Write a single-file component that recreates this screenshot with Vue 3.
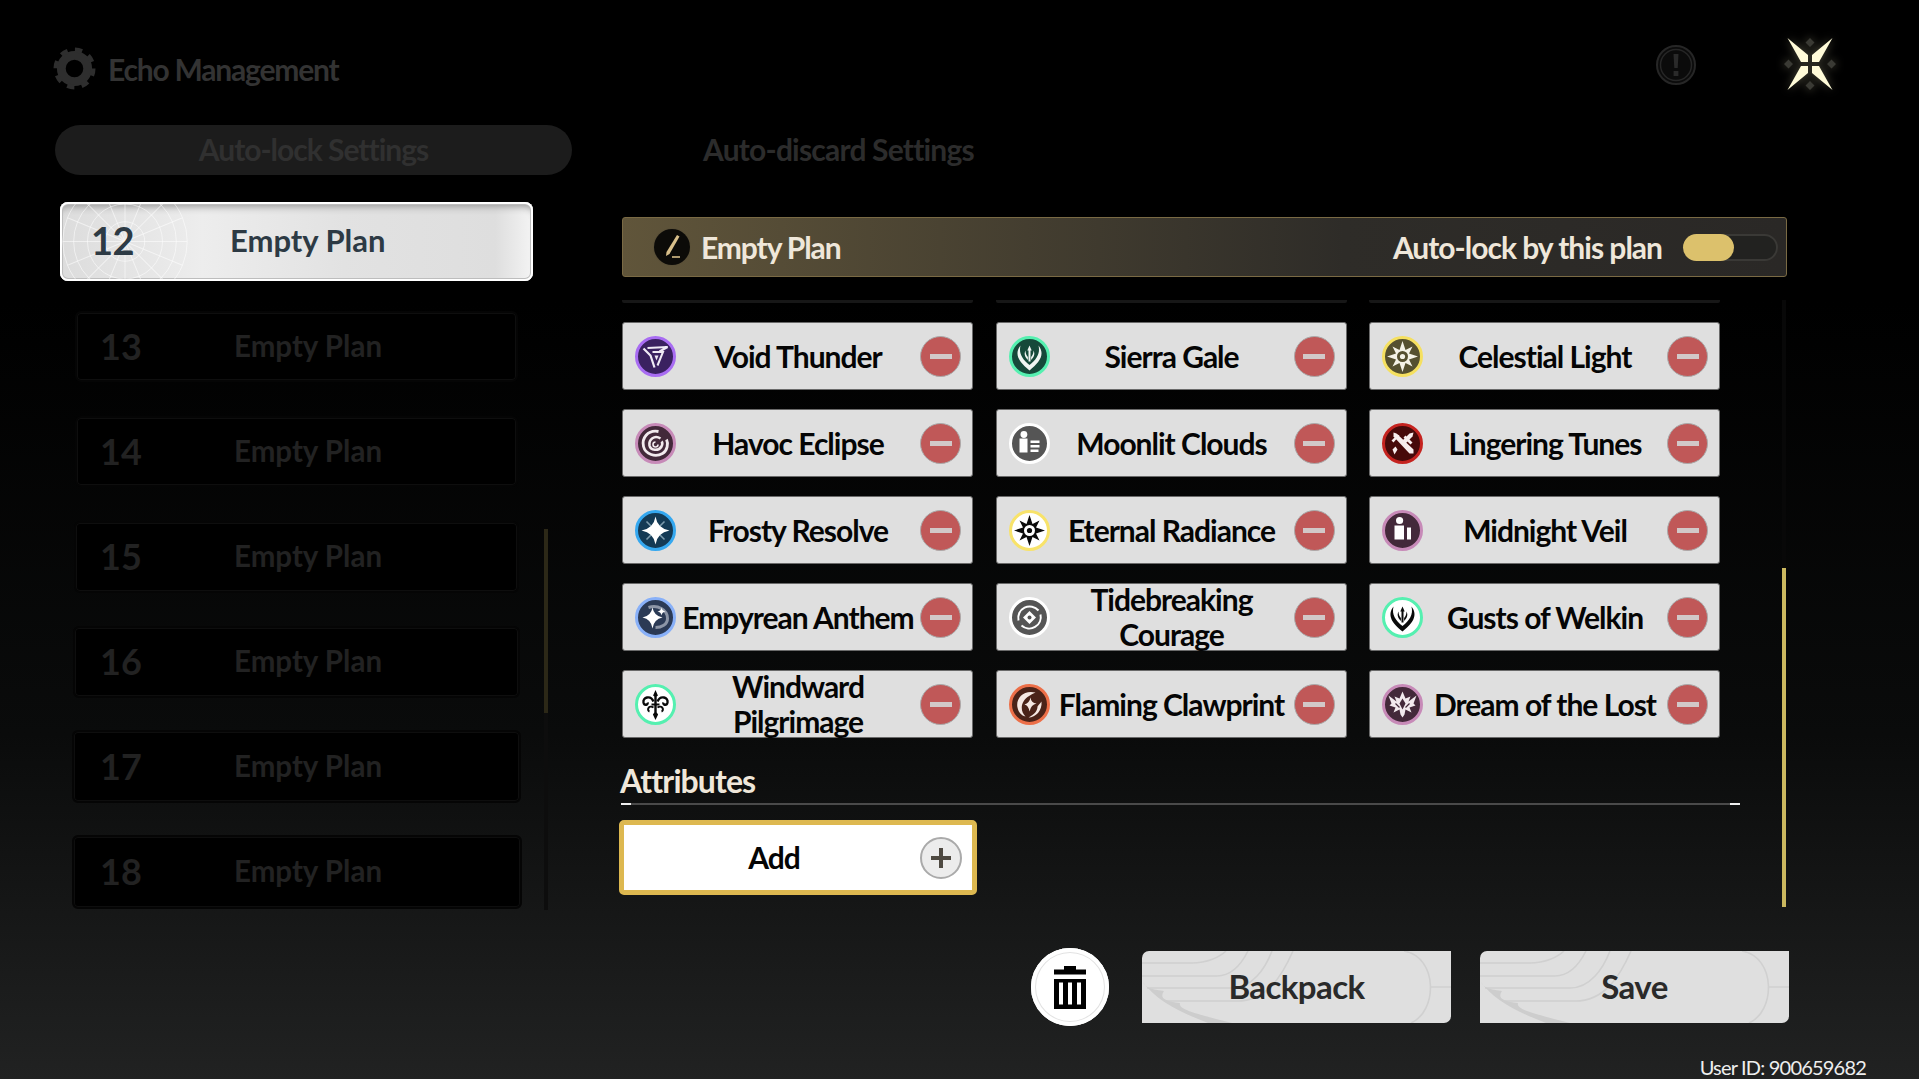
<script setup>
const plans = [
  { n: 13, w: 443, h: 71 },
  { n: 14, w: 443, h: 71 },
  { n: 15, w: 445, h: 72 },
  { n: 16, w: 447, h: 72 },
  { n: 17, w: 449, h: 73 },
  { n: 18, w: 450, h: 74 }
]
const sun = (c, bg) => [
  { d: 'M0 -15.5 L3 -6.5 L10 -10 L6.5 -3 L15.5 0 L6.5 3 L10 10 L3 6.5 L0 15.5 L-3 6.5 L-10 10 L-6.5 3 L-15.5 0 L-6.5 -3 L-10 -10 L-3 -6.5Z', fill: c },
  { d: 'M-5.5 0a5.5 5.5 0 1 0 11 0a5.5 5.5 0 1 0 -11 0Z', fill: bg },
  { d: 'M-2.6 0a2.6 2.6 0 1 0 5.2 0a2.6 2.6 0 1 0 -5.2 0Z', fill: c }
]
const gust = c => [
  { d: 'M0 -11 L2.2 -6 L1 -6 L1 5 L-1 5 L-1 -6 L-2.2 -6Z', fill: c },
  { d: 'M-4 -6 C-6 -2 -4 1 -1.6 3.5 L-1.6 0.5 C-3 -1 -4 -3 -4 -6Z M4 -6 C6 -2 4 1 1.6 3.5 L1.6 0.5 C3 -1 4 -3 4 -6Z', fill: c },
  { d: 'M-9 -11 C-16 -2 -10 6 0 14 C10 6 16 -2 9 -11 C11 -3 7 3 0 8.5 C-7 3 -11 -3 -9 -11Z', fill: c }
]
const glyphs = {
  void: [
    { d: 'M-12 -8 L-5 -1 L-1 11', stroke: '#efeaf5', w: 2.2 },
    { d: 'M-8 -8.5 L12 -9.5 L4 -5', stroke: '#efeaf5', w: 2.2 },
    { d: 'M-3 -4.5 L7.5 -4.5 L2 9', stroke: '#efeaf5', w: 2 },
    { d: 'M-1 -1 L3 -1 L1 4Z', fill: '#efeaf5' }
  ],
  sierra: gust('#f0f5f2'),
  celestial: sun('#f4f2e6', '#55502f'),
  havoc: [
    { d: 'M3 -12 C-8 -14 -14 -5 -12 3 C-10 11 0 14 7 10 C12 7 13 0 11 -4', stroke: '#f2eaee', w: 2.8 },
    { d: 'M5 -5 C-1 -9 -7 -4 -6 2 C-5 7 3 8 6 3 C7 1 7 -1 6 -2', stroke: '#f2eaee', w: 2.6 },
    { d: 'M0 -1.5 a2.5 2.5 0 1 0 2.5 2.5', stroke: '#f2eaee', w: 1.6 }
  ],
  moonlit: [
    { d: 'M-9 -9a3.4 3.4 0 1 0 6.8 0a3.4 3.4 0 1 0 -6.8 0Z', fill: '#fff' },
    { d: 'M-10 -5 H-2 V9 H-10Z', fill: '#fff' },
    { d: 'M1 -3 H10 V-0.5 H1Z M1 1.5 H10 V4 H1Z M1 6 H9 V8.5 H1Z', fill: '#fff' }
  ],
  lingering: [
    { d: 'M-9 -11 L-6 -10 L11 6 L11 10 L7 10 L-9 -7Z', fill: '#f8eeee' },
    { d: 'M11 -11 L7 -10 L-1 -2 L2 1 L10 -7Z', fill: '#f8eeee' },
    { d: 'M-11 -3 L-5 -9 L-3 -8 L-9 -1Z M3 -8 L10 -1 L8 1 L1 -6Z', fill: '#f8eeee' },
    { d: 'M-7 3 L-5 6 L-8 11 L-10 6Z', fill: '#f8eeee' }
  ],
  frosty: [
    { d: 'M-9 -9 L9 9 M9 -9 L-9 9', stroke: '#7d9bad', w: 1.6 },
    { d: 'M0 -14 Q1.8 -2.2 14 0 Q1.8 2.2 0 14 Q-1.8 2.2 -14 0 Q-1.8 -2.2 0 -14Z', fill: '#fff' }
  ],
  eternal: sun('#0b0b0b', '#fff'),
  midnight: [
    { d: 'M-6.5 -10a3.6 3.6 0 1 0 7.2 0a3.6 3.6 0 1 0 -7.2 0Z', fill: '#fff' },
    { d: 'M-8 -5 H1.5 V9 H-8Z', fill: '#fff' },
    { d: 'M4.5 -3 H8.5 V9 H4.5Z', fill: '#fff' }
  ],
  empyrean: [
    { d: 'M-7 -10 C2 -13 12 -8 12 1 C12 7 6 10 0 10', stroke: '#8c95a6', w: 3 },
    { d: 'M-3 -10 Q-1.6 -1.6 7 0 Q-1.6 1.6 -3 11 Q-4.4 1.6 -13 0 Q-4.4 -1.6 -3 -10Z', fill: '#fff' },
    { d: 'M6 -10 Q6.5 -6.5 10 -6 Q6.5 -5.5 6 -2 Q5.5 -5.5 2 -6 Q5.5 -6.5 6 -10Z', fill: '#fff' }
  ],
  tide: [
    { d: 'M-11 3 A11.5 11.5 0 0 1 9 -7', stroke: '#fff', w: 2 },
    { d: 'M11 -3 A11.5 11.5 0 0 1 -8 8', stroke: '#fff', w: 2 },
    { d: 'M0 -6.5 L6.5 0 L0 6.5 L-6.5 0Z', fill: '#fff' },
    { d: 'M-2 0a2 2 0 1 0 4 0a2 2 0 1 0 -4 0Z', fill: '#555' }
  ],
  gusts: gust('#0a0a0a'),
  wind: [
    { d: 'M0 -14.5 L2.4 -9 L1.2 -8 L1.2 8 L2.6 10 L0 15.5 L-2.6 10 L-1.2 8 L-1.2 -8 L-2.4 -9Z', fill: '#0a0a0a' },
    { d: 'M-2 -3 C-5 -10 -13 -7 -12 -2 C-11 2 -7 0 -8 -2 M2 -3 C5 -10 13 -7 12 -2 C11 2 7 0 8 -2', stroke: '#0a0a0a', w: 2.4 },
    { d: 'M-2 3 C-7 0 -9 6 -6 7 M2 3 C7 0 9 6 6 7 M-4 0 H4', stroke: '#0a0a0a', w: 2 }
  ],
  flaming: [
    { d: 'M6 -12 C-6 -15 -14 -6 -12 3 C-11 8 -8 11 -4 12 C-8 8 -9 2 -6 -3 C-3 -8 2 -10 6 -12Z', fill: '#f5e8e2' },
    { d: 'M12 -3 C13 6 6 13 -1 13 C5 10 8 6 8 2 C9 0 11 -1 12 -3Z', fill: '#f5e8e2' },
    { d: 'M1 -7 Q1.6 -1.6 7 -1 Q1.6 0 0 7 Q-1 1 -5 0 Q0 -1.6 1 -7Z', fill: '#f5e8e2' }
  ],
  dream: [
    { d: 'M0 -13 L3 -6 L8 -8 L6 -3 L14 -9 L11 -1 L13 1 L7 3 L9 8 L3 5 L2 10 L0 13 L-2 10 L-3 5 L-9 8 L-7 3 L-13 1 L-11 -1 L-14 -9 L-6 -3 L-8 -8 L-3 -6Z', fill: '#f2eaee' },
    { d: 'M0 -6 L3 -1 L0 5 L-3 -1Z', fill: '#43293a' },
    { d: 'M-7 -1 L-3 3 M7 -1 L3 3', stroke: '#43293a', w: 1.2 }
  ]
}
const sonatas = [
  { name: 'Void Thunder', icon: 'void', ring: '#a86cf2', bg: '#3a2160' },
  { name: 'Sierra Gale', icon: 'sierra', ring: '#55f0b0', bg: '#16493a' },
  { name: 'Celestial Light', icon: 'celestial', ring: '#f5e060', bg: '#55502f' },
  { name: 'Havoc Eclipse', icon: 'havoc', ring: '#c78ab8', bg: '#43293a' },
  { name: 'Moonlit Clouds', icon: 'moonlit', ring: '#ffffff', bg: '#555555' },
  { name: 'Lingering Tunes', icon: 'lingering', ring: '#c5231f', bg: '#470a0a' },
  { name: 'Frosty Resolve', icon: 'frosty', ring: '#35a8f0', bg: '#143a55' },
  { name: 'Eternal Radiance', icon: 'eternal', ring: '#f8e36a', bg: '#ffffff' },
  { name: 'Midnight Veil', icon: 'midnight', ring: '#c78ab8', bg: '#43293a' },
  { name: 'Empyrean Anthem', icon: 'empyrean', ring: '#88b0f8', bg: '#2b3a55' },
  { name: 'Tidebreaking Courage', icon: 'tide', ring: '#ffffff', bg: '#555555' },
  { name: 'Gusts of Welkin', icon: 'gusts', ring: '#55f0b0', bg: '#ffffff' },
  { name: 'Windward Pilgrimage', icon: 'wind', ring: '#55f0b0', bg: '#ffffff' },
  { name: 'Flaming Clawprint', icon: 'flaming', ring: '#ec6f48', bg: '#4a2318' },
  { name: 'Dream of the Lost', icon: 'dream', ring: '#c78ab8', bg: '#43293a' }
]
const spokes = Array.from({ length: 16 }, (_, i) => i * 22.5)
</script>

<template>
  <div class="page">
    <header class="top">
      <div class="title">
        <svg class="gear" viewBox="-22 -22 44 44">
          <circle r="13.5" fill="none" stroke="#2e2e2e" stroke-width="9" />
          <circle r="19" fill="none" stroke="#2e2e2e" stroke-width="5" stroke-dasharray="7.4 7.5" />
        </svg>
        <span>Echo Management</span>
      </div>
      <svg class="warn" viewBox="-21 -21 42 42">
        <circle r="19" fill="#0b0b0b" stroke="#262626" stroke-width="2" />
        <circle r="15.5" fill="none" stroke="#262626" stroke-width="1.5" />
        <path d="M-2.5 -11 H2.5 L1.7 3 H-1.7Z M-2.4 6 H2.4 V11 H-2.4Z" fill="#2a2a2a" />
      </svg>
      <svg class="close" viewBox="-28 -28 56 56">
        <path d="M0 -26 L4.5 -21.5 L0 -17 L-4.5 -21.5Z M0 26 L4.5 21.5 L0 17 L-4.5 21.5Z M-26 0 L-21.5 4.5 L-17 0 L-21.5 -4.5Z M26 0 L21.5 4.5 L17 0 L21.5 -4.5Z" fill="#3a3a34" />
        <path d="M-22.5 -26 L-2 -9 L-2 -2 L-9 -2Z M22.5 -26 L2 -9 L2 -2 L9 -2Z M-22.5 26 L-2 9 L-2 2 L-9 2Z M22.5 26 L2 9 L2 2 L9 2Z" fill="#fffbd8" />
      </svg>
    </header>

    <nav class="tabs">
      <div class="tab active">Auto-lock Settings</div>
      <div class="tab">Auto-discard Settings</div>
    </nav>

    <main class="body">
      <aside class="side">
        <div class="plans">
          <div class="plan current">
            <svg class="web" viewBox="-65 -40 130 80">
              <g fill="none" stroke="#fff" stroke-opacity=".55">
                <circle r="20" />
                <circle r="38" />
                <circle r="52" />
                <circle r="63" />
                <line v-for="a in spokes" :key="a" x1="0" y1="0" x2="63" y2="0" :transform="`rotate(${a})`" />
              </g>
            </svg>
            <span class="num">12</span>
            <span class="plan-name">Empty Plan</span>
          </div>
          <div v-for="p in plans" :key="p.n" class="slot">
            <div class="plan dim" :style="{ width: p.w + 'px', height: p.h + 'px', paddingLeft: (p.w - 443) / 2 + 'px' }">
              <span class="num">{{ p.n }}</span>
              <span class="plan-name">Empty Plan</span>
            </div>
          </div>
        </div>
        <div class="side-track"><div class="side-thumb"></div></div>
      </aside>

      <section class="panel">
        <div class="plan-head">
          <div class="pen">
            <svg viewBox="-18 -18 36 36">
              <path d="M5 -12 L7.5 -10.5 L-2.5 7 L-6 9 L-5.5 5Z" fill="#d8bf8a" />
              <path d="M0 10 H8" stroke="#d8bf8a" stroke-width="1.6" />
            </svg>
          </div>
          <span class="head-name">Empty Plan</span>
          <span class="head-label">Auto-lock by this plan</span>
          <div class="toggle"><div class="knob"></div></div>
        </div>

        <div class="scroller">
          <div class="scroll-content">
            <div class="grid">
              <div class="remnant"></div>
              <div class="remnant"></div>
              <div class="remnant"></div>
              <div v-for="s in sonatas" :key="s.name" class="card">
                <svg class="sonata" viewBox="-20.5 -20.5 41 41">
                  <circle r="19" :fill="s.bg" :stroke="s.ring" stroke-width="3" />
                  <path
                    v-for="(g, i) in glyphs[s.icon]"
                    :key="i"
                    :d="g.d"
                    :fill="g.fill || 'none'"
                    :stroke="g.stroke || 'none'"
                    :stroke-width="g.w || 0"
                  />
                </svg>
                <span class="card-name">{{ s.name }}</span>
                <div class="minus"><i></i></div>
              </div>
            </div>
            <h3 class="attr">Attributes</h3>
            <div class="rule"></div>
            <div class="add">
              <span>Add</span>
              <div class="plus"><i></i></div>
            </div>
          </div>
          <div class="track"><div class="thumb"></div></div>
        </div>

        <div class="actions">
          <div class="trash">
            <svg viewBox="0 0 32 43">
              <path d="M10 0 H22 V3.5 H10Z M0 3.5 H32 V8.5 H0Z" fill="#000" />
              <path d="M0 13 H32 V43 H0Z" fill="#000" />
              <path d="M5 16.5 H9 V38.5 H5Z M14 16.5 H18 V38.5 H14Z M23 16.5 H27 V38.5 H23Z" fill="#fff" />
            </svg>
          </div>
          <div v-for="b in ['Backpack', 'Save']" :key="b" class="btn">
            <svg class="btn-art" viewBox="0 0 309 72">
              <g fill="none" stroke="#d0d0d0" stroke-width="1.6">
                <path d="M0 12 H50 C65 12 78 6 84 0" />
                <path d="M0 25 H75 C90 25 100 12 106 0" />
                <path d="M5 37 H90 C110 37 123 18 130 0" />
                <path d="M22 50 H95 C125 50 140 25 151 0" />
                <path d="M262 0 C296 6 296 60 269 72" />
                <path d="M288 36 H309" />
              </g>
              <path d="M0 30 C4 36 6 38 22 40 C18 46 20 50 38 52 C36 58 50 62 90 72 H66 C40 62 14 50 0 30Z" fill="#cdcdcd" />
            </svg>
            <span>{{ b }}</span>
          </div>
        </div>
      </section>
    </main>

    <footer class="uid">User ID: 900659682</footer>
  </div>
</template>

<style>
html, body { margin: 0; background: #000; }
</style>

<style scoped>
.page {
  width: 1919px;
  height: 1079px;
  overflow: hidden;
  background: linear-gradient(#000 0, #000 28%, #0a0b0b 68%, #212222 100%);
  font-family: Lato, "Noto Sans", sans-serif;
  font-weight: 700;
  letter-spacing: -1px;
  display: flex;
  flex-direction: column;
}
.top {
  height: 125px;
  box-sizing: border-box;
  padding: 36px 81px 0 53px;
  display: flex;
  align-items: flex-start;
}
.title {
  display: flex;
  align-items: center;
  gap: 12px;
  margin-top: 11px;
  height: 43px;
  font-size: 30px;
  letter-spacing: -1.2px;
  color: #333;
  flex: 1;
}
.gear { width: 43px; height: 43px; }
.warn { width: 42px; height: 42px; margin: 8px 85px 0 0; }
.close { width: 56px; height: 56px; filter: drop-shadow(0 0 5px rgba(255, 250, 200, .35)); }
.tabs { display: flex; height: 50px; padding-left: 55px; }
.tab {
  font-size: 30px;
  line-height: 48px;
  letter-spacing: -0.8px;
  color: #2c2c2c;
  margin-left: 131px;
}
.tab.active {
  width: 517px;
  margin-left: 0;
  text-align: center;
  background: #1c1c1c;
  border-radius: 25px;
  letter-spacing: -1px;
  color: #303030;
}
.body { display: flex; padding-top: 27px; }
.side {
  width: 622px;
  flex: none;
  box-sizing: border-box;
  padding-left: 60px;
  display: flex;
}
.plans { width: 473px; flex: none; display: flex; flex-direction: column; }
.slot {
  height: 105px;
  display: flex;
  align-items: center;
  justify-content: center;
}
.plan {
  position: relative;
  display: flex;
  align-items: center;
  box-sizing: border-box;
  flex: none;
  overflow: hidden;
}
.plan.current {
  width: 473px;
  height: 79px;
  margin-bottom: 13px;
  padding-bottom: 4px;
  border-radius: 8px;
  background: linear-gradient(90deg, #dcdcdc, #ededed 30%, #e2e2e2 60%, #dedede 92%, #f4f4f4);
  box-shadow: inset 0 0 0 2px #fff, inset 0 0 0 3px #bdbdbd, inset 0 9px 7px -4px #9c9c9c;
  color: #2d3a44;
}
.web { position: absolute; left: 0; top: 0; width: 130px; height: 79px; }
.current .num { position: relative; margin-left: 31px; width: 139px; font-size: 38px; letter-spacing: -0.5px; }
.current .plan-name { position: relative; font-size: 31px; letter-spacing: 0; }
.plan.dim {
  background: #000;
  border: 2px solid #050505;
  border-radius: 6px;
  box-shadow: inset 0 0 0 1px #0e0e0e;
  padding-bottom: 2px;
  color: #222;
}
.dim .num { margin-left: 23px; width: 134px; font-size: 36px; letter-spacing: 0; }
.dim .plan-name { font-size: 29.5px; letter-spacing: 0; }
.side-track {
  width: 4px;
  margin: 327px 0 0 11px;
  height: 381px;
  background: #0d0d0d;
}
.side-thumb { height: 184px; background: #2c2817; }
.panel { width: 1167px; flex: none; display: flex; flex-direction: column; padding-top: 15px; }
.plan-head {
  width: 1165px;
  height: 60px;
  box-sizing: border-box;
  border: 1px solid #7a6a44;
  border-radius: 3px;
  background: linear-gradient(90deg, #60553a, #2e2c28 62%, #2a2826);
  display: flex;
  align-items: center;
  padding: 0 8px 0 31px;
  font-size: 30px;
  color: #efe7da;
}
.pen {
  width: 36px;
  height: 36px;
  border-radius: 50%;
  background: #0c0b08;
  box-shadow: 0 0 0 1px #5a5038;
}
.pen svg { display: block; }
.head-name { margin-left: 11px; flex: 1; letter-spacing: -1.1px; }
.head-label { margin-right: 21px; }
.toggle {
  width: 95px;
  height: 27px;
  box-sizing: border-box;
  border: 2px solid #3a3936;
  border-radius: 14px;
  background: #222220;
  position: relative;
}
.knob {
  position: absolute;
  left: -2px;
  top: -2px;
  width: 51px;
  height: 27px;
  border-radius: 14px;
  background: #dcc16c;
}
.scroller { display: flex; height: 607px; margin-top: 23px; }
.scroll-content { width: 1160px; flex: none; box-sizing: border-box; }
.grid {
  display: grid;
  grid-template-columns: repeat(3, 351px);
  column-gap: 22.5px;
  row-gap: 19px;
  grid-auto-rows: 68px;
  grid-template-rows: 3px;
}
.remnant { background: #171717; border-radius: 0 0 2px 2px; }
.card {
  box-sizing: border-box;
  background: #dfdfdf;
  border: 1px solid #6a6a6a;
  border-radius: 3px;
  display: flex;
  align-items: center;
  padding: 0 11px 0 12px;
  color: #050505;
}
.sonata { width: 41px; height: 41px; flex: none; }
.card-name {
  flex: 1;
  text-align: center;
  font-size: 30px;
  line-height: 35px;
  padding: 0 1px;
}
.minus {
  width: 41px;
  height: 41px;
  flex: none;
  box-sizing: border-box;
  border: 1px solid #aaa;
  border-radius: 50%;
  background: #c05858;
  display: flex;
  align-items: center;
  justify-content: center;
}
.minus i { width: 22px; height: 5px; background: #d2c8c8; }
.attr {
  margin: 25px 0 0 -2px;
  font-size: 32px;
  line-height: 36px;
  font-weight: 700;
  letter-spacing: -0.9px;
  color: #efe7da;
}
.rule {
  height: 2px;
  margin: 4px 0 0 -1px;
  width: 1119px;
  background: linear-gradient(90deg, #eee 10px, #4a4a4a 10px, #4a4a4a calc(100% - 10px), #eee calc(100% - 10px));
}
.add {
  width: 358px;
  height: 75px;
  margin: 15px 0 0 -3px;
  box-sizing: border-box;
  border: 5px solid #ddb850;
  border-radius: 5px;
  background: #fff;
  display: flex;
  align-items: center;
  font-size: 30px;
  color: #050505;
}
.add span { flex: 1; text-align: center; padding-left: 4px; padding-bottom: 1px; }
.plus {
  width: 42px;
  height: 42px;
  margin-right: 10px;
  box-sizing: border-box;
  border: 2px solid #aaa;
  border-radius: 50%;
  background:
    linear-gradient(#4f4a42, #4f4a42) center / 20px 4px no-repeat,
    linear-gradient(#4f4a42, #4f4a42) center / 4px 20px no-repeat,
    #ececec;
}
.track { width: 4px; background: #080808; }
.thumb { height: 339px; margin-top: 268px; background: #cbb85f; }
.actions {
  display: flex;
  justify-content: flex-end;
  align-items: center;
  margin-top: 41px;
  height: 78px;
}
.trash {
  width: 78px;
  height: 78px;
  box-sizing: border-box;
  border-radius: 50%;
  background: #fff;
  box-shadow: inset 0 0 0 4px #fff, inset 0 0 0 5px #e2e2e2;
  display: flex;
  align-items: center;
  justify-content: center;
  margin-right: 33px;
}
.trash svg { width: 32px; height: 43px; }
.btn {
  position: relative;
  width: 309px;
  height: 72px;
  box-sizing: border-box;
  padding-bottom: 2px;
  border-radius: 7px 0 7px 0;
  background: #dfdfdf;
  overflow: hidden;
  display: flex;
  align-items: center;
  justify-content: center;
  font-size: 33px;
  letter-spacing: -0.6px;
  color: #2a2a2a;
}
.btn + .btn { margin-left: 29px; }
.btn-art { position: absolute; inset: 0; width: 309px; height: 72px; }
.btn span { position: relative; }
.uid {
  margin-top: 29px;
  text-align: right;
  padding-right: 53px;
  font-size: 20px;
  line-height: 24px;
  font-weight: 400;
  letter-spacing: -0.8px;
  color: #eee;
}
</style>
